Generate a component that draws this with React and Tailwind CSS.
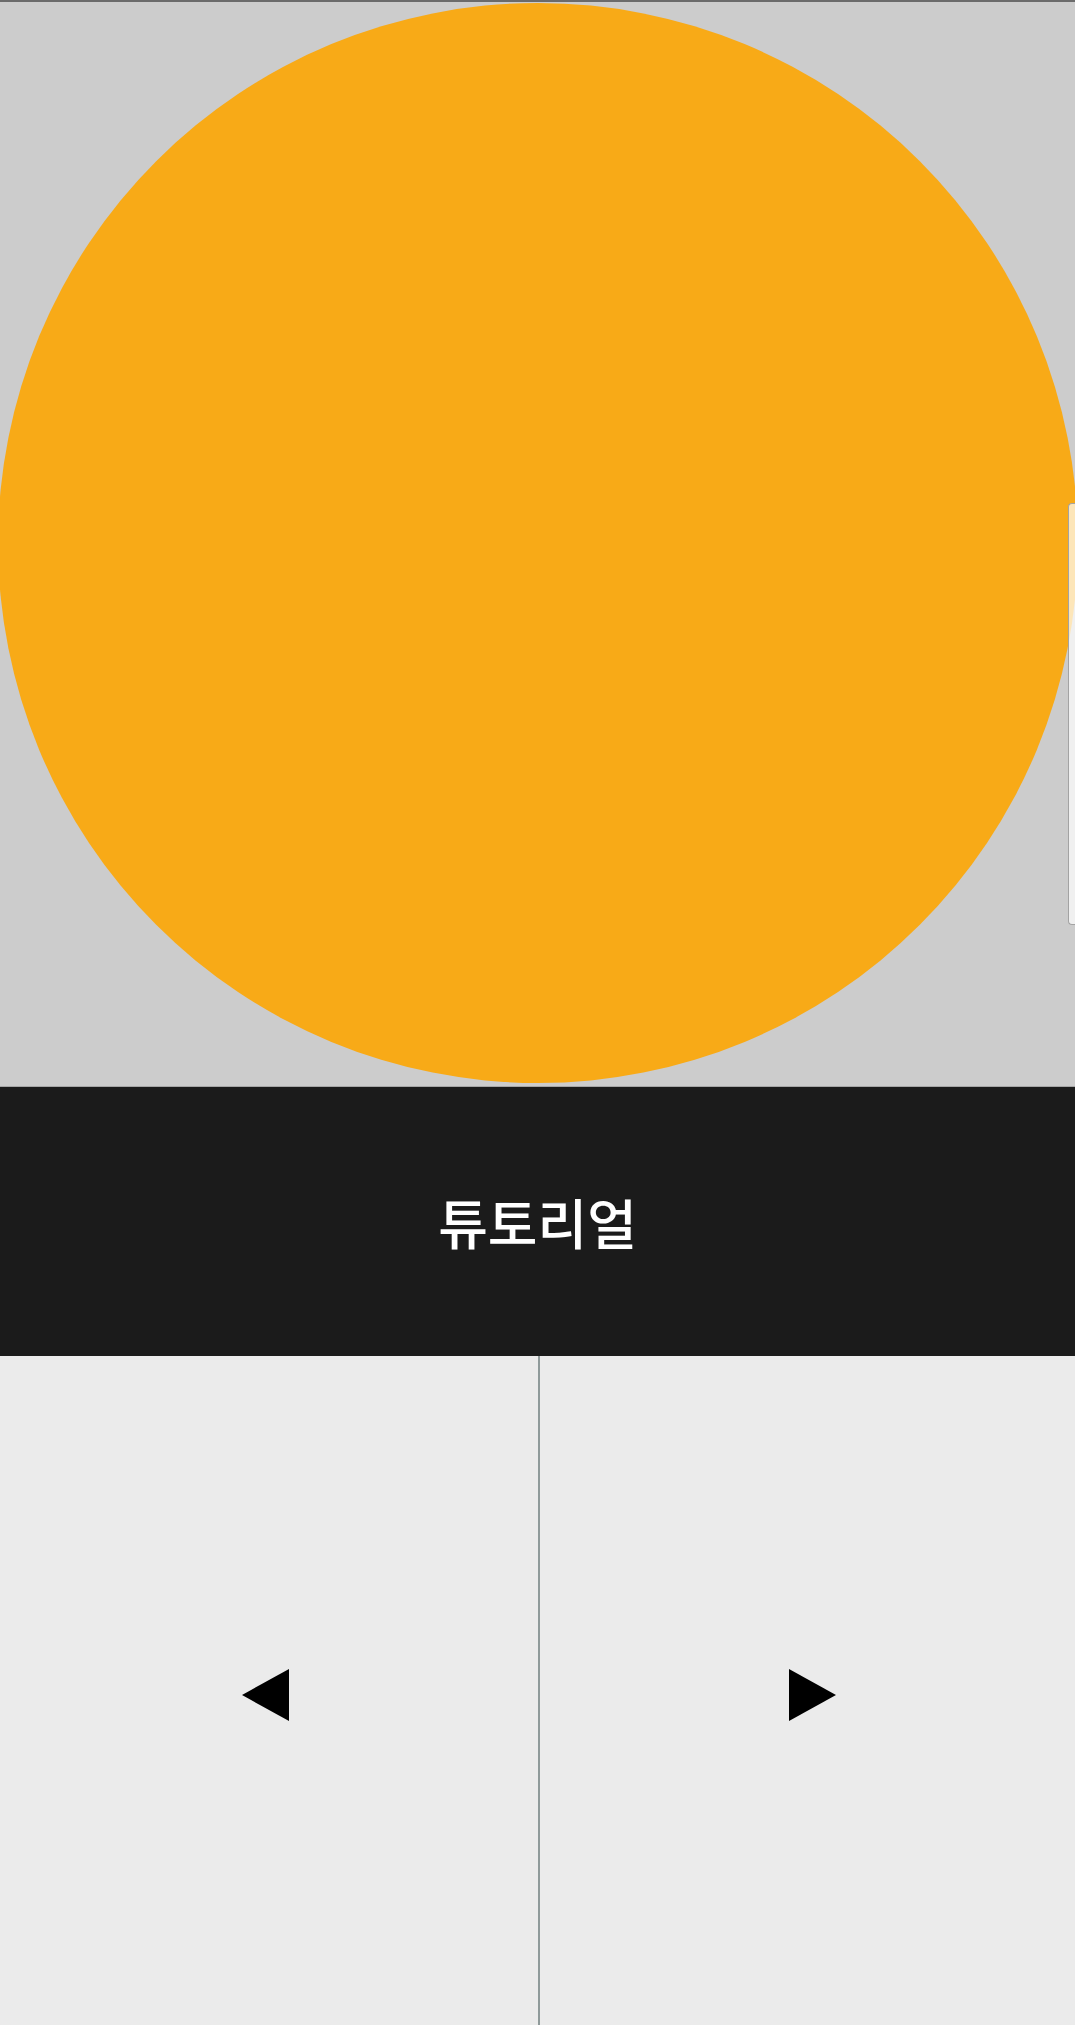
const Arrow = ({ dir }) => (
    <svg width="48" height="54" viewBox="0 0 48 54" className="block">
        {dir === 'left'
            ? <polygon points="0,27 47,1 47,53" fill="#000" />
            : <polygon points="1,1 48,27 1,53" fill="#000" />}
    </svg>
);

const App = () => {
    return (
        <div className="w-[1075px] h-[2025px] flex flex-col bg-[#ebebeb] overflow-hidden">
            <div className="relative h-[1086px] shrink-0 bg-[#cccccc] border-t-2 border-[#6b6b6b] flex justify-center overflow-hidden">
                <div className="shrink-0 mt-[1px] w-[1080px] h-[1080px] rounded-full bg-[#f8aa17]" />
                <div className="absolute right-0 top-[501px] w-[7px] h-[422px] rounded-l-[4px] border border-r-0 border-[#a3a3a3] bg-white/70" />
            </div>
            <div className="h-[270px] shrink-0 bg-[#1b1b1b] border-t border-[#a6a6a6] flex items-center justify-center">
                <span className="text-white text-[54px] font-medium leading-none font-['Noto_Sans_CJK_JP','Noto_Sans_CJK_KR',sans-serif]">튜토리얼</span>
            </div>
            <div className="flex-1 grid grid-cols-[538px_2px_1fr]">
                <button type="button" className="flex items-center justify-center">
                    <span className="-translate-x-[3px] translate-y-[4px]"><Arrow dir="left" /></span>
                </button>
                <div className="bg-[#8f9a9a]" />
                <button type="button" className="flex items-center justify-center">
                    <span className="translate-x-[4px] translate-y-[4px]"><Arrow dir="right" /></span>
                </button>
            </div>
        </div>
    );
};

export default App;
